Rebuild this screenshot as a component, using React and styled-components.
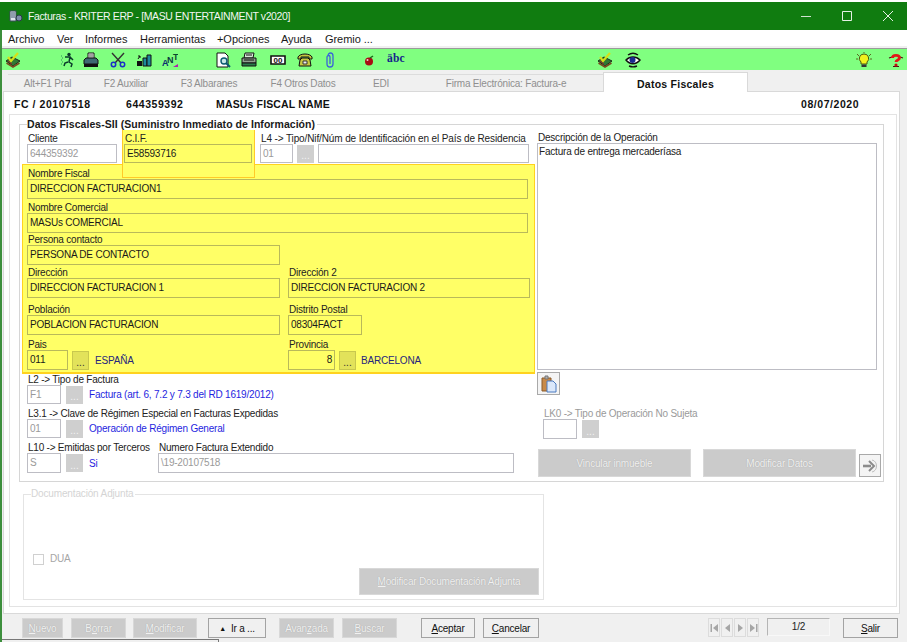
import React from "react";
import styled, { createGlobalStyle } from "styled-components";

const Global = createGlobalStyle`
  html, body { margin: 0; padding: 0; background: #fff; }
  body { font-family: "Liberation Sans", Arial, sans-serif; font-size: 10px; letter-spacing: -0.2px; color: #222; overflow: hidden; }
  * { box-sizing: border-box; }
`;

const Win = styled.div`
  position: relative;
  width: 907px;
  height: 642px;
  padding-top: 2px;
  background: #fff;
  overflow: hidden;
`;
const TitleBar = styled.div`
  height: 28px;
  background: #107c10;
  color: #f2f7f2;
  display: flex;
  align-items: center;
  padding-left: 9px;
  font-size: 10.5px;
  letter-spacing: -0.38px;
`;
const TitleText = styled.span`
  margin-left: 5px;
  flex: 1;
`;
const WinBtn = styled.div`
  width: 38px;
  margin-left: 3px;
  height: 28px;
  display: flex;
  align-items: center;
  justify-content: center;
`;
const Body = styled.div`
  border-left: 2px solid #3d8f3d;
  height: 612px;
  background: #f0f0f0;
`;
const Menu = styled.div`
  height: 16px;
  background: #fff;
  display: flex;
  align-items: center;
  padding: 1px 0 0 6px;
  font-size: 11px;
  letter-spacing: -0.05px;
  color: #1a1a1a;
`;
const MenuItem = styled.span`
  width: ${(p) => p.$w}px;
`;
const Toolbar = styled.div`
  margin-top: 2px;
  height: 22px;
  background: #80ff80;
  border-top: 1px solid #9a9a9a;
  display: flex;
  align-items: center;
`;
const ToolSlot = styled.div`
  margin-left: ${(p) => p.$gap}px;
  width: 16px;
  height: 16px;
  flex: none;
`;
const ToolbarEnd = styled.div`
  margin-left: auto;
  padding-right: 3px;
  display: flex;
`;
const AbcMark = styled.span`
  display: block;
  font-family: "Liberation Serif", serif;
  font-weight: 700;
  font-size: 11.5px;
  letter-spacing: 0.2px;
  line-height: 12px;
  color: #14238c;
`;
const Tabs = styled.div`
  height: 20px;
  margin-top: 2px;
  padding-left: 6px;
  display: flex;
  align-items: flex-end;
`;
const Tab = styled.div`
  width: ${(p) => p.$w}px;
  height: 18px;
  padding-top: 1px;
  display: flex;
  align-items: center;
  justify-content: center;
  position: relative;
  background: #f0f0f0;
  color: #8f8f8f;
  border-top: 1px solid #dcdcdc;
  border-bottom: 1px solid #d9d9d9;
`;
const ActiveTab = styled(Tab)`
  height: 20px;
  padding-top: 3px;
  z-index: 2;
  background: #fff;
  color: #111;
  font-size: 10.5px;
  font-weight: 700;
  letter-spacing: 0.25px;
  border: 1px solid #d9d9d9;
  border-bottom: 0;
`;
const Panel = styled.div`
  margin-left: 1px;
  width: 897px;
  height: 523px;
  margin-top: -1px;
  background: #fff;
  border: 1px solid #d9d9d9;
  padding-left: 5px;
`;
const Head = styled.div`
  height: 22px;
  padding-top: 6px;
  display: flex;
  font-weight: 700;
  font-size: 10.5px;
  letter-spacing: 0.15px;
  color: #111;
`;
const HeadCell = styled.span`
  width: ${(p) => p.$w}px;
  letter-spacing: ${(p) => (p.$wide ? "0.55px" : "inherit")};
`;
const Frame = styled.div`
  width: 888px;
  height: 493px;
  border: 1px solid #e3e3e3;
  padding: 9px 0 0 9px;
`;
const GroupBox = styled.div`
  position: relative;
  width: 865px;
  height: 358px;
  border: 1px solid #d6d6d6;
`;
const DocBox = styled(GroupBox)`
  width: 521px;
  height: 106px;
  margin: 12px 0 0 4px;
  border-color: #e4e4e4;
`;
const Legend = styled.span`
  position: absolute;
  top: -7px;
  left: 7px;
  padding-right: 2px;
  background: #fff;
  line-height: 12px;
  font-size: 10.5px;
  font-weight: 700;
  letter-spacing: 0.05px;
  color: #1a1a1a;
  z-index: 3;
`;
const DimLegend = styled(Legend)`
  font-size: 10px;
  font-weight: 400;
  letter-spacing: -0.15px;
  color: #d4d4d4;
`;
const Columns = styled.div`
  display: flex;
`;
const LeftCol = styled.div`
  width: 517px;
  padding: 7px 0 0 2px;
`;
const RightCol = styled.div`
  width: 345px;
  padding-top: 6px;
`;
const Row = styled.div`
  display: flex;
  align-items: flex-end;
  margin-top: ${(p) => p.$top || 0}px;
  padding-left: ${(p) => p.$inset || 0}px;
`;
const Field = styled.div`
  width: ${(p) => p.$w}px;
  flex: none;
  margin-right: ${(p) => p.$after || 0}px;
`;
const Label = styled.div`
  height: 12px;
  line-height: 13px;
  padding-left: 1px;
  white-space: nowrap;
  letter-spacing: ${(p) => (p.$loose ? "-0.12px" : "-0.22px")};
  color: ${(p) => (p.$off ? "#9a9a9a" : "#222")};
`;
const Input = styled.div`
  height: ${(p) => p.$h || 20}px;
  width: ${(p) => (p.$w ? `${p.$w}px` : "100%")};
  flex: none;
  margin-left: ${(p) => p.$before || 0}px;
  line-height: ${(p) => (p.$h || 20) - 2}px;
  padding: 0 2px;
  white-space: nowrap;
  text-align: ${(p) => (p.$right ? "right" : "left")};
  letter-spacing: -0.22px;
  background: ${(p) => (p.$hot ? "#ffff66" : "#fff")};
  border: 1px solid ${(p) => (p.$hot ? "#b9b95a" : "#bdbdc4")};
  color: ${(p) => (p.$off ? "#9a9a9a" : "#1a1a1a")};
`;
const Dots = styled.div`
  width: 17px;
  height: ${(p) => (p.$hot ? 19 : 18)}px;
  flex: none;
  margin: 0 ${(p) => p.$after || 0}px 0 ${(p) => p.$before || 0}px;
  display: flex;
  align-items: center;
  justify-content: center;
  padding-top: 4px;
  letter-spacing: 0;
  background: ${(p) => (p.$hot ? "#e2e25a" : "#cfcfcf")};
  border: 1px solid ${(p) => (p.$hot ? "#c8c84e" : "#cfcfcf")};
  color: ${(p) => (p.$hot ? "#333" : "#f2f2f2")};
`;
const Hot = styled.div`
  width: 513px;
  height: 210px;
  margin-top: 1px;
  padding: 2px 0 0 4px;
  background: #ffff66;
  border: 1px solid #ffd21e;
  border-bottom-width: 2px;
`;
const CifMark = styled.div`
  position: absolute;
  top: 4px;
  left: 102px;
  width: 133px;
  height: 49px;
  background: #ffff66;
  border: 1px solid #ffc928;
  z-index: 2;
`;
const Layer = styled.div`
  position: relative;
  z-index: ${(p) => p.$z};
`;
const Value = styled.span`
  margin-left: ${(p) => p.$gap ?? 6}px;
  white-space: nowrap;
  color: ${(p) => (p.$navy ? "#26267e" : "#1f1fe0")};
`;
const Inline = styled.div`
  display: flex;
  align-items: center;
`;
const Memo = styled.div`
  width: 340px;
  height: 227px;
  background: #fff;
  border: 1px solid #bdbdc4;
  padding: 1px;
  line-height: 13px;
`;
const Square = styled.div`
  width: ${(p) => p.$w}px;
  height: 23px;
  flex: none;
  display: flex;
  align-items: center;
  justify-content: center;
  background: #f4f4f4;
  border: 1px solid #a9a9a9;
  margin-top: ${(p) => p.$top || 0}px;
  margin-left: ${(p) => p.$left || 0}px;
`;
const Off = styled.div`
  width: ${(p) => p.$w}px;
  height: ${(p) => p.$h}px;
  flex: none;
  margin-left: ${(p) => p.$left || 0}px;
  display: flex;
  align-items: center;
  justify-content: center;
  white-space: nowrap;
  background: #cbcbcb;
  border: 1px solid #d8d8d8;
  color: #f1f1f1;
  text-shadow: 0 0 1px #9a9a9a;
`;
const DocInner = styled.div`
  height: 100%;
  padding: 58px 4px 0 9px;
`;
const Check = styled.div`
  width: 11px;
  height: 11px;
  border: 1px solid #d0d0d0;
  margin-right: 6px;
`;
const DimText = styled.span`
  color: #a6a6a6;
  line-height: 12px;
`;
const DocEnd = styled.div`
  display: flex;
  justify-content: flex-end;
  margin-top: 3px;
`;
const Footer = styled.div`
  height: 28px;
  padding: 4px 0 0 20px;
  display: flex;
  align-items: flex-start;
`;
const Btn = styled.div`
  width: ${(p) => p.$w}px;
  height: 20px;
  flex: none;
  margin-left: ${(p) => p.$left || 0}px;
  display: flex;
  align-items: center;
  justify-content: center;
  gap: 5px;
  background: #f0f0f0;
  border: 1px solid #a3a3a3;
  color: #111;
`;
const Caret = styled.span`
  font-size: 7px;
`;
const NavBtn = styled.div`
  width: 12px;
  height: 19px;
  margin-right: 1px;
  display: flex;
  align-items: center;
  justify-content: center;
  border: 1px solid #dcdcdc;
`;
const Nav = styled.div`
  display: flex;
  margin-left: ${(p) => p.$left}px;
`;
const Pager = styled.div`
  width: 63px;
  height: 18px;
  margin-left: 7px;
  text-align: center;
  line-height: 15px;
  border: 1px solid #b5b5b5;
  border-right-color: #f8f8f8;
  border-bottom-color: #f8f8f8;
`;
const BackWin = styled.div`
  position: absolute;
  left: 2px;
  top: 639px;
  width: 217px;
  height: 3px;
  background: #f0f0f0;
  border-top: 1px solid #777;
  border-right: 1px solid #777;
`;
const U = styled.span`
  text-decoration: underline;
`;

const Books = () => (
  <svg width="16" height="16" viewBox="0 0 16 16">
    <path d="M1 9l6-4 8 4-7 5z" fill="#2f7a34" stroke="#1c2a18" />
    <path d="M1.5 11l6.5 4 6.5-4" fill="none" stroke="#7a4a20" strokeWidth="1.6" />
    <path d="M3 5l3 4 7-8" fill="none" stroke="#d6e018" strokeWidth="2.2" />
    <path d="M3 9l4 3" stroke="#a0202a" />
  </svg>
);
const Runner = () => (
  <svg width="16" height="16" viewBox="0 0 16 16">
    <circle cx="10" cy="2.5" r="1.7" fill="#0a3a2a" />
    <path d="M6 5h5l-1 5 3 2-1 3M9 10l-3 1-1 3M11 5l3 3" stroke="#0a3a2a" strokeWidth="1.5" fill="none" />
    <path d="M2 4h2M3 6h2M2 8h2M3 10h2M2 12h2" stroke="#2a8a5a" strokeDasharray="1 1" />
  </svg>
);
const Stamp = () => (
  <svg width="16" height="16" viewBox="0 0 16 16">
    <path d="M5 1h6v6H5z" fill="#fff" stroke="#111" />
    <path d="M1 8l2-2h10l2 2v4H1z" fill="#3d6a72" stroke="#111" />
    <path d="M1 12h14v3H1z" fill="#111" />
    <path d="M6 3h4M6 5h4" stroke="#444" />
  </svg>
);
const Scissors = () => (
  <svg width="16" height="16" viewBox="0 0 16 16" fill="none">
    <path d="M2 1l9 10M14 1L5 11" stroke="#333" strokeWidth="1.4" />
    <circle cx="3.5" cy="12.5" r="2.2" stroke="#1a2fc8" strokeWidth="1.5" />
    <circle cx="12.5" cy="12.5" r="2.2" stroke="#1a2fc8" strokeWidth="1.5" />
  </svg>
);
const Boxes = () => (
  <svg width="16" height="16" viewBox="0 0 16 16">
    <path d="M1 9h5v5H1z" fill="#111" />
    <path d="M7 6h4v8H7z" fill="#1c8a9c" stroke="#111" />
    <path d="M11 3h4v11h-4z" fill="#1c8a9c" stroke="#111" />
    <path d="M2 7l2-3M4 4H2M4 4v2" stroke="#111" fill="none" />
  </svg>
);
const Sort = () => (
  <svg width="16" height="16" viewBox="0 0 16 16">
    <text x="0" y="14" fontSize="9" fontWeight="700" letterSpacing="0" fill="#0a2a70">A</text>
    <text x="5" y="11" fontSize="9" fontWeight="700" letterSpacing="0" fill="#0a3a40">N</text>
    <text x="11" y="8" fontSize="9" fontWeight="700" letterSpacing="0" fill="#0a4a30">T</text>
    <path d="M11 15h5v-3z" fill="#b020b0" />
  </svg>
);
const Preview = () => (
  <svg width="16" height="16" viewBox="0 0 16 16">
    <path d="M1 1h8l3 3v11H1z" fill="#fff" stroke="#111" />
    <circle cx="8" cy="9" r="3" fill="#c8e8e8" stroke="#0a5a70" strokeWidth="1.4" />
    <path d="M10 11l4 4" stroke="#0a5a70" strokeWidth="2" />
  </svg>
);
const Printer = () => (
  <svg width="16" height="16" viewBox="0 0 16 16">
    <path d="M4 1h9l-1 5H3z" fill="#d8e8d8" stroke="#111" />
    <path d="M1 6h14v5H1z" fill="#8fa08f" stroke="#111" />
    <path d="M1 11h14v3H1z" fill="#2a7a4a" stroke="#111" />
    <path d="M5 3h6M3 8h10" stroke="#111" />
  </svg>
);
const Counter = () => (
  <svg width="16" height="16" viewBox="0 0 16 16">
    <path d="M1 4h14v8H1z" fill="#fff" stroke="#111" strokeWidth="1.6" />
    <text x="8" y="11" fontSize="8" fontWeight="700" letterSpacing="0" textAnchor="middle" fill="#111">00</text>
  </svg>
);
const Phone = () => (
  <svg width="16" height="16" viewBox="0 0 16 16">
    <path d="M1 5c2-4 12-4 14 0v2h-3V5H4v2H1z" fill="#c4c840" stroke="#111" />
    <path d="M3 8l2-2h6l2 2 1 6H2z" fill="#c8c840" stroke="#111" />
    <path d="M6 9h4v3H6z" fill="#eee" stroke="#333" />
  </svg>
);
const Clip = () => (
  <svg width="16" height="16" viewBox="0 0 16 16" fill="none">
    <path d="M6 4c0-4 5-4 5 0v8c0 4-6 4-6 0V5c0-2 3-2 3 0v7" stroke="#3a64d8" strokeWidth="1.3" />
  </svg>
);
const Ball = () => (
  <svg width="16" height="16" viewBox="0 0 16 16">
    <circle cx="8" cy="9.5" r="4" fill="#a80c14" />
    <circle cx="6.5" cy="8" r="1" fill="#f0d0d0" />
    <path d="M9 6l3-2" stroke="#1a6a1a" strokeWidth="1.5" />
  </svg>
);
const Eye = () => (
  <svg width="16" height="16" viewBox="0 0 16 16" fill="none">
    <path d="M3 3c3-2 7-2 10 0" stroke="#111" strokeWidth="1.5" />
    <path d="M1 8c4-4 10-4 14 0-4 5-10 5-14 0z" fill="#fff" stroke="#111" strokeWidth="1.5" />
    <circle cx="7.5" cy="8" r="3" fill="#1a2a90" />
    <path d="M4 14c3 1.3 5 1.3 8 0" stroke="#111" strokeWidth="1.4" />
  </svg>
);
const Bulb = () => (
  <svg width="16" height="16" viewBox="0 0 16 16">
    <path d="M1 2l2 2M15 2l-2 2M0 7h2M14 7h2M8 0v1" stroke="#5a6a20" />
    <path d="M8 2a4.5 4.5 0 0 1 3 8v2H5v-2a4.5 4.5 0 0 1 3-8z" fill="#f2f21e" stroke="#4a5a10" />
    <path d="M5.5 12.5h5v2.5h-5z" fill="#333" />
  </svg>
);
const Help = () => (
  <svg width="16" height="16" viewBox="0 0 16 16" fill="none">
    <path d="M1 6l3-1M15 6l-3-1M5 14.5h6" stroke="#4a1010" strokeWidth="1.2" />
    <path d="M4.5 6c0-3.4 7-3.4 7 0 0 2-3.500 2-3.500 4" stroke="#e01818" strokeWidth="2.8" />
    <circle cx="8" cy="13" r="1.6" fill="#c01010" />
  </svg>
);
const Paste = () => (
  <svg width="18" height="18" viewBox="0 0 18 18">
    <path d="M2 3h9v13H2z" fill="#c98a48" stroke="#8a5a2a" />
    <path d="M5 1h3v3H5z" fill="#b0b0b0" stroke="#777" />
    <path d="M7 6h6l3 3v8H7z" fill="#dbe8fa" stroke="#4a7ac0" />
  </svg>
);
const Arrow = () => (
  <svg width="16" height="14" viewBox="0 0 16 14" fill="none">
    <path d="M1 7h8" stroke="#8c8c8c" strokeWidth="2.6" />
    <path d="M7 2l5 5-5 5" stroke="#8c8c8c" strokeWidth="2" />
    <path d="M10 1c6 1 6 11 0 12" stroke="#bdbdbd" />
  </svg>
);
const NavIcon = ({ d }) => (
  <svg width="9" height="10" viewBox="0 0 9 10">
    <path d={d} fill="#a6a6a6" />
  </svg>
);

const tools = [
  [3, Books], [38, Runner], [8, Stamp], [11, Scissors], [10, Boxes], [10, Sort],
  [38, Preview], [9, Printer], [13, Counter], [11, Phone], [9, Clip], [23, Ball],
];

export default function App() {
  return (
    <Win>
      <Global />
      <TitleBar>
        <svg width="14" height="14" viewBox="0 0 14 14">
          <path d="M1 2h6v10H1z" fill="#dfe6ee" stroke="#3a4a5a" />
          <circle cx="10" cy="9" r="3" fill="#7c8ea8" stroke="#2a3a4a" />
          <path d="M2 4h4M2 6h4M2 8h4" stroke="#41556e" />
        </svg>
        <TitleText>Facturas - KRITER ERP - [MASU ENTERTAINMENT v2020]</TitleText>
        <WinBtn>
          <svg width="10" height="10"><path d="M0 5.5h10" stroke="#cfe3cf" /></svg>
        </WinBtn>
        <WinBtn>
          <svg width="10" height="10"><path d="M.5.5h9v9h-9z" fill="none" stroke="#e6f0e6" /></svg>
        </WinBtn>
        <WinBtn>
          <svg width="10" height="10"><path d="M0 0l10 10M10 0L0 10" stroke="#e6f0e6" /></svg>
        </WinBtn>
      </TitleBar>
      <Body>
        <Menu>
          <MenuItem $w={49}>Archivo</MenuItem>
          <MenuItem $w={28}>Ver</MenuItem>
          <MenuItem $w={55}>Informes</MenuItem>
          <MenuItem $w={77}>Herramientas</MenuItem>
          <MenuItem $w={64}>+Opciones</MenuItem>
          <MenuItem $w={44}>Ayuda</MenuItem>
          <MenuItem $w={60}>Gremio ...</MenuItem>
        </Menu>
        <Toolbar>
          {tools.map(([gap, Icon], i) => (
            <ToolSlot key={i} $gap={gap}><Icon /></ToolSlot>
          ))}
          <ToolSlot $gap={10}><AbcMark>äbc</AbcMark></ToolSlot>
          <ToolSlot $gap={194}><Books /></ToolSlot>
          <ToolSlot $gap={12}><Eye /></ToolSlot>
          <ToolbarEnd>
            <ToolSlot $gap={0}><Bulb /></ToolSlot>
            <ToolSlot $gap={16}><Help /></ToolSlot>
          </ToolbarEnd>
        </Toolbar>
        <Tabs>
          <Tab $w={79}>Alt+F1 Pral</Tab>
          <Tab $w={78}>F2 Auxiliar</Tab>
          <Tab $w={88}>F3 Albaranes</Tab>
          <Tab $w={100}>F4 Otros Datos</Tab>
          <Tab $w={56}>EDI</Tab>
          <Tab $w={194}>Firma Electrónica: Factura-e</Tab>
          <ActiveTab $w={145}>Datos Fiscales</ActiveTab>
        </Tabs>
        <Panel>
          <Head>
            <HeadCell $w={5} />
            <HeadCell $w={112} $wide>FC / 20107518</HeadCell>
            <HeadCell $w={90} $wide>644359392</HeadCell>
            <HeadCell $w={585}>MASUs FISCAL NAME</HeadCell>
            <HeadCell $w={70} $wide>08/07/2020</HeadCell>
          </Head>
          <Frame>
            <GroupBox>
              <Legend>Datos Fiscales-SII (Suministro Inmediato de Información)</Legend>
              <CifMark />
              <Columns>
                <LeftCol>
                  <Layer $z={3}>
                    <Row $inset={5}>
                      <Field $w={97}>
                        <Label>Cliente</Label>
                        <Input $w={90} $h={19} $off>644359392</Input>
                      </Field>
                      <Field $w={136}>
                        <Label>C.I.F.</Label>
                        <Input $w={128} $h={19} $hot>E58593716</Input>
                      </Field>
                      <Field $w={272}>
                        <Label $loose>L4 -&gt; Tipo/Nif/Núm de Identificación en el País de Residencia</Label>
                        <Inline>
                          <Input $w={33} $h={19} $off>01</Input>
                          <Dots $before={4}>...</Dots>
                          <Input $w={211} $h={19} $before={4} />
                        </Inline>
                      </Field>
                    </Row>
                  </Layer>
                  <Layer $z={1}>
                    <Hot>
                      <Row>
                        <Field $w={501}>
                          <Label>Nombre Fiscal</Label>
                          <Input $hot>DIRECCION FACTURACION1</Input>
                        </Field>
                      </Row>
                      <Row $top={2}>
                        <Field $w={501}>
                          <Label>Nombre Comercial</Label>
                          <Input $hot>MASUs COMERCIAL</Input>
                        </Field>
                      </Row>
                      <Row>
                        <Field $w={253}>
                          <Label>Persona contacto</Label>
                          <Input $hot>PERSONA DE CONTACTO</Input>
                        </Field>
                      </Row>
                      <Row $top={1}>
                        <Field $w={253} $after={8}>
                          <Label>Dirección</Label>
                          <Input $hot>DIRECCION FACTURACION 1</Input>
                        </Field>
                        <Field $w={242}>
                          <Label>Dirección 2</Label>
                          <Input $hot>DIRECCION FACTURACION 2</Input>
                        </Field>
                      </Row>
                      <Row $top={5}>
                        <Field $w={253} $after={8}>
                          <Label>Población</Label>
                          <Input $hot>POBLACION FACTURACION</Input>
                        </Field>
                        <Field $w={74}>
                          <Label>Distrito Postal</Label>
                          <Input $hot>08304FACT</Input>
                        </Field>
                      </Row>
                      <Row $top={3}>
                        <Field $w={261}>
                          <Label>Pais</Label>
                          <Inline>
                            <Input $w={41} $hot>011</Input>
                            <Dots $hot $before={4}>...</Dots>
                            <Value $navy>ESPAÑA</Value>
                          </Inline>
                        </Field>
                        <Field $w={240}>
                          <Label>Provincia</Label>
                          <Inline>
                            <Input $w={47} $hot $right>8</Input>
                            <Dots $hot $before={4}>...</Dots>
                            <Value $navy $gap={5}>BARCELONA</Value>
                          </Inline>
                        </Field>
                      </Row>
                    </Hot>
                  </Layer>
                  <Row $top={-1} $inset={5}>
                    <Field $w={400}>
                      <Label>L2 -&gt; Tipo de Factura</Label>
                      <Inline>
                        <Input $w={34} $h={19} $off>F1</Input>
                        <Dots $before={5}>...</Dots>
                        <Value>Factura (art. 6, 7.2 y 7.3 del RD 1619/2012)</Value>
                      </Inline>
                    </Field>
                  </Row>
                  <Row $top={3} $inset={5}>
                    <Field $w={400}>
                      <Label>L3.1 -&gt; Clave de Régimen Especial en Facturas Expedidas</Label>
                      <Inline>
                        <Input $w={34} $h={19} $off>01</Input>
                        <Dots $before={5}>...</Dots>
                        <Value>Operación de Régimen General</Value>
                      </Inline>
                    </Field>
                  </Row>
                  <Row $top={3} $inset={5}>
                    <Field $w={131}>
                      <Label>L10 -&gt; Emitidas por Terceros</Label>
                      <Inline>
                        <Input $w={34} $off>S</Input>
                        <Dots $before={5}>...</Dots>
                        <Value>Si</Value>
                      </Inline>
                    </Field>
                    <Field $w={356}>
                      <Label>Numero Factura Extendido</Label>
                      <Input $off>\19-20107518</Input>
                    </Field>
                  </Row>
                </LeftCol>
                <RightCol>
                  <Label>Descripción de la Operación</Label>
                  <Memo>Factura de entrega mercaderíasa</Memo>
                  <Square $w={23} $top={2}><Paste /></Square>
                  <Row $top={12} $inset={6}>
                    <Field $w={200}>
                      <Label $off>LK0 -&gt; Tipo de Operación No Sujeta</Label>
                      <Inline>
                        <Input $w={34} />
                        <Dots $before={5}>...</Dots>
                      </Inline>
                    </Field>
                  </Row>
                  <Row $top={10} $inset={1}>
                    <Off $w={153} $h={28}>Vincular inmueble</Off>
                    <Off $w={153} $h={28} $left={12}>Modificar Datos</Off>
                    <Square $w={22} $left={3}><Arrow /></Square>
                  </Row>
                </RightCol>
              </Columns>
            </GroupBox>
            <DocBox>
              <DimLegend>Documentación Adjunta</DimLegend>
              <DocInner>
                <Inline>
                  <Check />
                  <DimText>DUA</DimText>
                </Inline>
                <DocEnd>
                  <Off $w={180} $h={27}><span><U>M</U>odificar Documentación Adjunta</span></Off>
                </DocEnd>
              </DocInner>
            </DocBox>
          </Frame>
        </Panel>
        <Footer>
          <Off $w={41} $h={20}><span><U>N</U>uevo</span></Off>
          <Off $w={55} $h={20} $left={8}><span>B<U>o</U>rrar</span></Off>
          <Off $w={64} $h={20} $left={7}><span><U>M</U>odificar</span></Off>
          <Btn $w={58} $left={11}><Caret>▲</Caret> Ir a ...</Btn>
          <Off $w={55} $h={20} $left={13}><span>Avan<U>z</U>ada</span></Off>
          <Off $w={55} $h={20} $left={8}><span><U>B</U>uscar</span></Off>
          <Btn $w={54} $left={24}><span><U>A</U>ceptar</span></Btn>
          <Btn $w={56} $left={8}><span><U>C</U>ancelar</span></Btn>
          <Nav $left={169}>
            <NavBtn><NavIcon d="M.5 1H2v8H.5zM8 1L3 5l5 4z" /></NavBtn>
            <NavBtn><NavIcon d="M7 1L2 5l5 4z" /></NavBtn>
            <NavBtn><NavIcon d="M2 1l5 4-5 4z" /></NavBtn>
            <NavBtn><NavIcon d="M1 1l5 4-5 4zM7 1h1.5v8H7z" /></NavBtn>
          </Nav>
          <Pager>1/2</Pager>
          <Btn $w={55} $left={13}><span><U>S</U>alir</span></Btn>
        </Footer>
      </Body>
      <BackWin />
    </Win>
  );
}
